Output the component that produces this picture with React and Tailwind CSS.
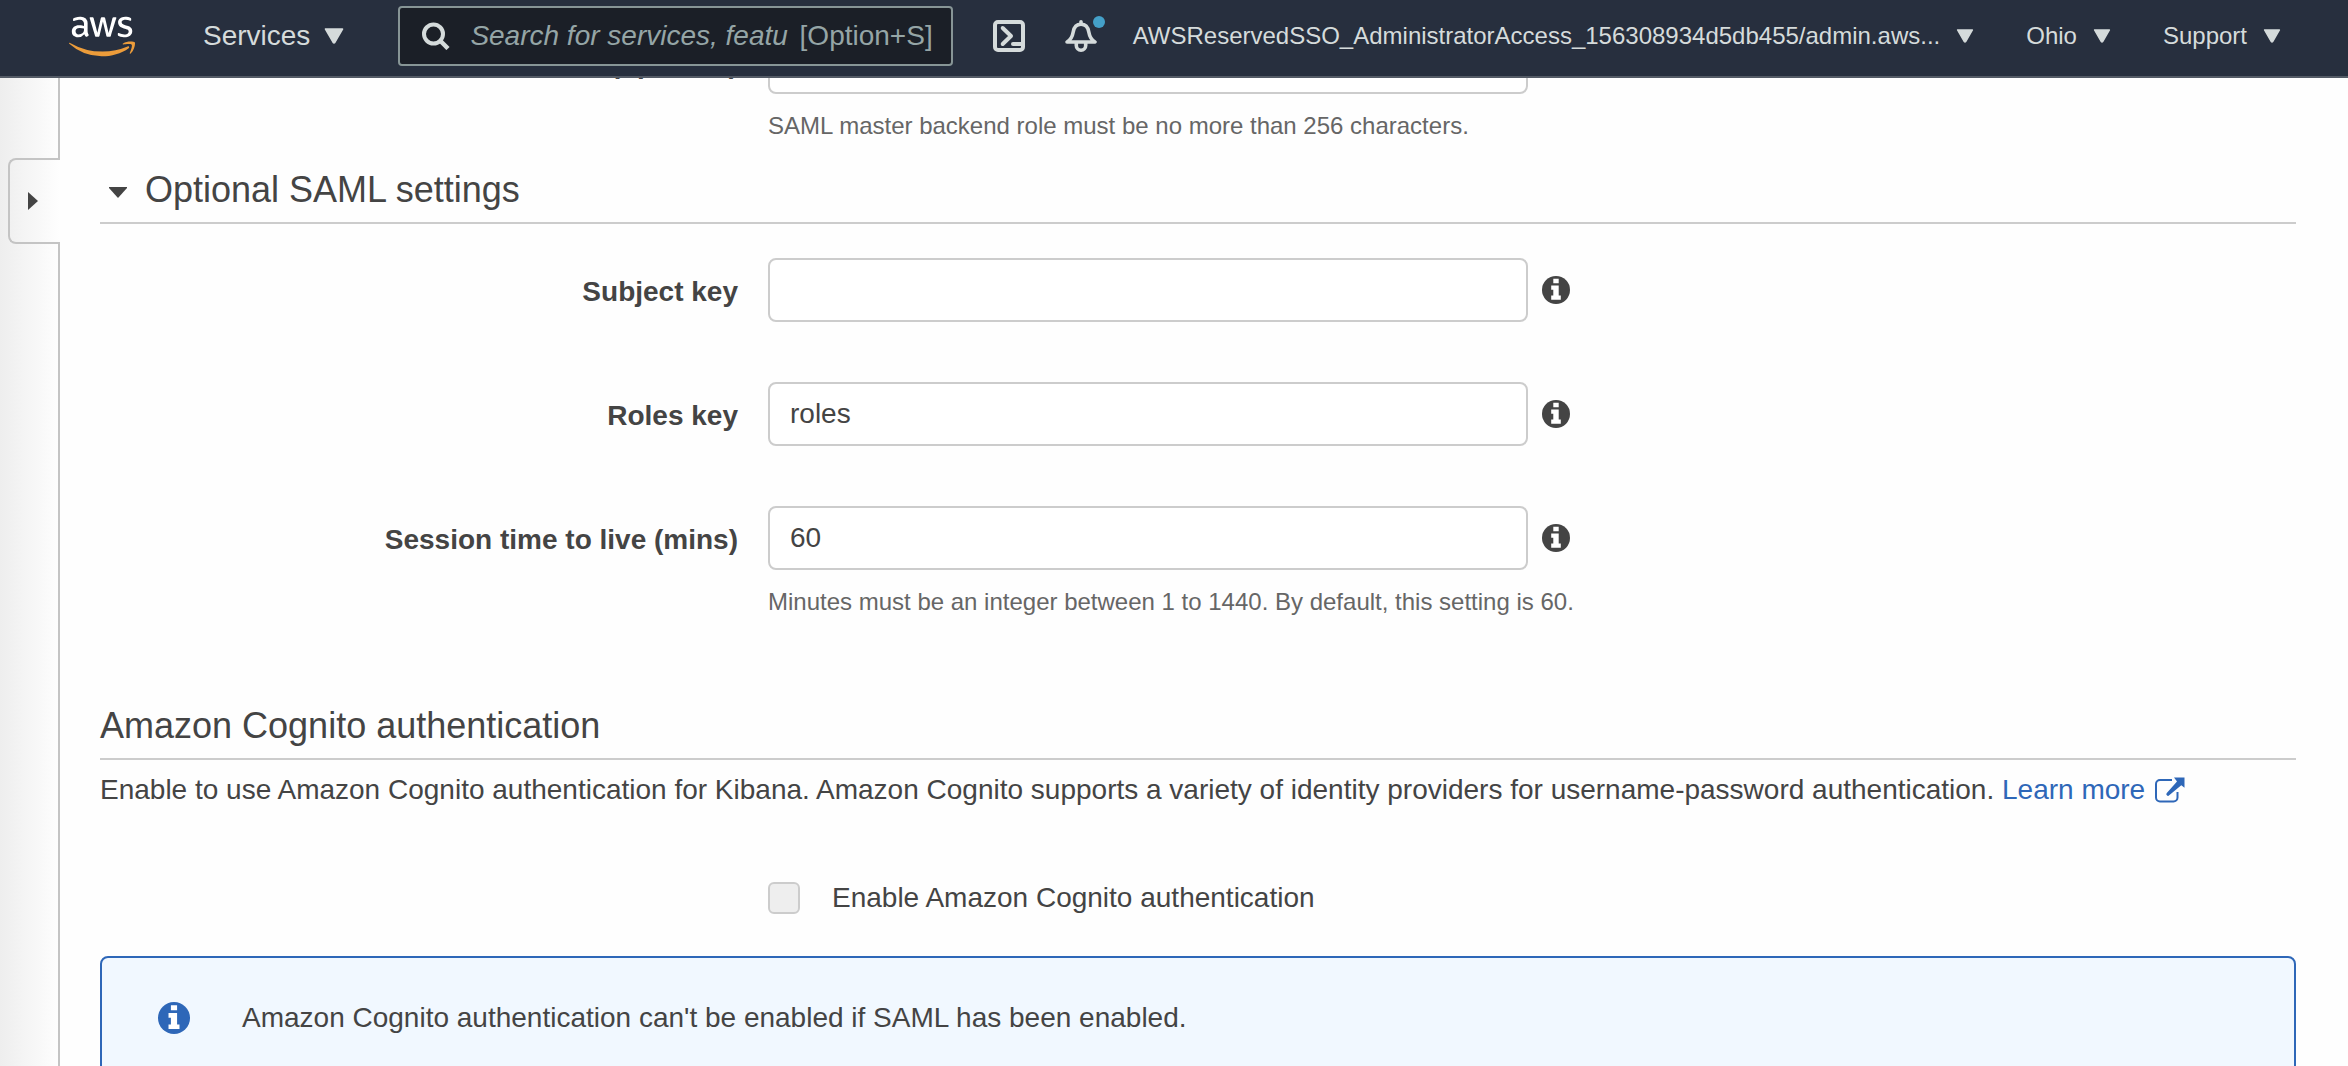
import React from "react";
import { FaAws } from "react-icons/fa";

function Caret({ className }) {
  return (
    <svg viewBox="0 0 20 16" className={className} aria-hidden="true">
      <path d="M1.5 1 H18.5 L10.8 14.4 Q10 15.4 9.2 14.4 Z" fill="currentColor" stroke="currentColor" strokeWidth="1.6" strokeLinejoin="round" />
    </svg>
  );
}

function InfoIcon({ className }) {
  return (
    <svg viewBox="0 0 28 28" className={className} aria-hidden="true">
      <circle cx="14" cy="14" r="14" fill="currentColor" />
      <path d="M11.3 2.8h5.4v4.4h-5.4z M9.2 9.6h7.5v10h2.1v4.1H9.2v-4.1h2.1v-5.9H9.2z" fill="#fff" />
    </svg>
  );
}

function ExternalIcon() {
  return (
    <svg viewBox="0 0 30 26" className="h-[26px] w-[30px]" aria-hidden="true">
      <path d="M17 3H5a4 4 0 0 0-4 4v13.500a4 4 0 0 0 4 4h13.500a4 4 0 0 0 4-4V15" fill="none" stroke="currentColor" strokeWidth="2" />
      <path d="M19 .5H29.500V10.800L26.300 8.200 14.200 18.300a1.600 1.600 0 0 1-2.400-2.300L22 4.500Z" fill="currentColor" />
    </svg>
  );
}

function TerminalIcon() {
  return (
    <svg viewBox="0 0 32 32" className="size-8" fill="none" stroke="currentColor" strokeLinecap="round" strokeLinejoin="round" aria-hidden="true">
      <rect x="2" y="2" width="28" height="28" rx="3" strokeWidth="4" />
      <path d="M9.700 8l8.300 8-8.300 8" strokeWidth="4" />
      <path d="M20 24h8" strokeWidth="4" />
    </svg>
  );
}

function BellIcon() {
  return (
    <svg viewBox="0 0 32 32" className="size-8" fill="none" stroke="currentColor" strokeLinejoin="round" strokeLinecap="round" aria-hidden="true">
      <path d="M2 22c4.500-2.500 5.600-6.500 6.200-10C9 7 11.500 4.300 16 4.300S23 7 23.800 12c.6 3.500 1.700 7.500 6.200 10z" strokeWidth="3.600" />
      <path d="M16 4V1.800" strokeWidth="3.600" />
      <path d="M11.300 23v2.500a4.700 4.700 0 0 0 9.400 0V23" strokeWidth="3.600" />
    </svg>
  );
}

function NavMenu({ children }) {
  return (
    <button type="button" className="flex shrink-0 items-center gap-4 text-[24px] leading-8 whitespace-nowrap">
      {children}
      <Caret className="h-[14px] w-[18px]" />
    </button>
  );
}

function Header() {
  return (
    <header className="relative z-10 flex h-[78px] shrink-0 items-center border-b-2 border-[#545b66] bg-[#272f3e] pr-[67px] pb-1 pl-[69px] text-[#d5dbdb]">
      <a href="#home" aria-label="AWS home" className="shrink-0">
        <svg width="0" height="0" className="absolute" aria-hidden="true">
          <linearGradient id="logo-fill" gradientUnits="userSpaceOnUse" x1="0" y1="0" x2="0" y2="512">
            <stop offset="0.58" stopColor="#fff" />
            <stop offset="0.58" stopColor="#ec9c3a" />
          </linearGradient>
        </svg>
        <FaAws fill="url(#logo-fill)" className="h-[53px] w-[66px]" />
      </a>
      <button type="button" className="ml-[68px] flex shrink-0 items-center gap-[14px] text-[28px] leading-9">
        Services
        <Caret className="h-4 w-5" />
      </button>
      <div className="ml-[54px] flex h-[60px] min-w-0 flex-1 items-center rounded border-2 border-[#879596] bg-[#1b1f27] pr-[18px] pl-[22px] text-[28px] text-[#95a5a6]">
        <svg viewBox="0 0 28 28" className="size-7 shrink-0 text-[#d5dbdb]" fill="none" stroke="currentColor" aria-hidden="true">
          <circle cx="11.500" cy="12" r="9.500" strokeWidth="4" />
          <path d="M18 18.500L26 26.500" strokeWidth="4.500" />
        </svg>
        <input
          type="text"
          aria-label="Search"
          placeholder="Search for services, features, marketplace products, and docs"
          className="ml-5 h-10 min-w-0 flex-1 bg-transparent italic outline-none placeholder:text-[#95a5a6]"
        />
        <span className="ml-3 shrink-0">[Option+S]</span>
      </div>
      <button type="button" aria-label="CloudShell" className="ml-10 shrink-0">
        <TerminalIcon />
      </button>
      <button type="button" aria-label="Notifications" className="relative mr-9 ml-10 shrink-0">
        <BellIcon />
        <span className="absolute -top-1 -right-2 size-3 rounded-full bg-[#44a0c8]" />
      </button>
      <div className="flex shrink-0 gap-[52px]">
        <NavMenu>AWSReservedSSO_AdministratorAccess_156308934d5db455/admin.aws...</NavMenu>
        <NavMenu>Ohio</NavMenu>
        <NavMenu>Support</NavMenu>
      </div>
    </header>
  );
}

function SideRail() {
  return (
    <aside className="flex w-[60px] shrink-0 flex-col bg-linear-to-r from-[#eeeeee] to-[#fefefe]">
      <div className="h-20 border-r-2 border-[#c4c4c4]" />
      <button
        type="button"
        aria-label="Open navigation"
        className="ml-2 flex h-[86px] items-center rounded-l-lg border-2 border-r-0 border-[#c4c4c4] pl-[18px] text-[#444]"
      >
        <svg viewBox="0 0 10 18" className="h-[18px] w-[10px]" aria-hidden="true">
          <path d="M0 0L10 9L0 18Z" fill="currentColor" />
        </svg>
      </button>
      <div className="flex-1 border-r-2 border-[#c4c4c4]" />
    </aside>
  );
}

function Field({ id, label, value, help, info = true }) {
  return (
    <div className="grid grid-cols-[638fr_1528fr] gap-[30px]">
      <label htmlFor={id} className="pt-4 text-right leading-9 font-bold">
        {label}
      </label>
      <div>
        <div className="flex items-center gap-[14px]">
          <input
            id={id}
            type="text"
            defaultValue={value}
            className="h-16 w-[760px] min-w-0 rounded-lg border-2 border-[#ccc] bg-white px-5 outline-none"
          />
          {info && (
            <button type="button" aria-label={`About ${label}`}>
              <InfoIcon className="size-7" />
            </button>
          )}
        </div>
        {help && <p className="mt-[14px] text-[24px] leading-9 text-[#666]">{help}</p>}
      </div>
    </div>
  );
}

export default function App() {
  return (
    <div className="flex h-screen flex-col overflow-hidden bg-[#fefefe] font-['Liberation_Sans',Arial,sans-serif] text-[28px] text-[#444]">
      <Header />
      <div className="flex min-h-0 flex-1">
        <SideRail />
        <main className="min-w-0 flex-1 overflow-hidden pr-[52px] pl-10">
          <div className="-mt-12">
            <Field
              id="backend-role"
              label="(optional)"
              value=""
              help="SAML master backend role must be no more than 256 characters."
              info={false}
            />
          </div>

          <section>
            <h2 className="mt-[22px] border-b-2 border-[#ccc] pb-2 text-[36px] leading-[48px]">
              <button type="button" aria-expanded="true" className="flex items-center gap-[18px] pl-[9px]">
                <svg viewBox="0 0 18 11" className="mt-1 h-[11px] w-[18px]" aria-hidden="true">
                  <path d="M0 0H18V1L9 11L0 1Z" fill="currentColor" />
                </svg>
                Optional SAML settings
              </button>
            </h2>
            <div className="mt-[34px] flex flex-col gap-[60px]">
              <Field id="subject-key" label="Subject key" value="" />
              <Field id="roles-key" label="Roles key" value="roles" />
              <Field
                id="session-ttl"
                label="Session time to live (mins)"
                value="60"
                help="Minutes must be an integer between 1 to 1440. By default, this setting is 60."
              />
            </div>
          </section>

          <section>
            <h2 className="mt-[82px] border-b-2 border-[#ccc] pb-2 text-[36px] leading-[48px]">Amazon Cognito authentication</h2>
            <p className="mt-[10px] leading-10">
              Enable to use Amazon Cognito authentication for Kibana. Amazon Cognito supports a variety of identity providers for
              username-password authentication.{" "}
              <a href="#learn-more" className="inline-flex items-center gap-[10px] text-[#2e67b8]">
                Learn more
                <ExternalIcon />
              </a>
            </p>
            <div className="mt-[72px] grid grid-cols-[638fr_1528fr] gap-[30px]">
              <div className="col-start-2 flex items-center gap-8 leading-8">
                <input
                  id="enable-cognito"
                  type="checkbox"
                  disabled
                  className="size-8 appearance-none rounded-md border-2 border-[#ccc] bg-[#eee]"
                />
                <label htmlFor="enable-cognito">Enable Amazon Cognito authentication</label>
              </div>
            </div>
            <div role="status" className="mt-[42px] flex items-center gap-[52px] rounded-lg border-2 border-[#2e67b8] bg-[#f1f8ff] px-14 py-10 leading-10">
              <InfoIcon className="size-8 text-[#2e67b8]" />
              Amazon Cognito authentication can't be enabled if SAML has been enabled.
            </div>
          </section>
        </main>
      </div>
    </div>
  );
}
